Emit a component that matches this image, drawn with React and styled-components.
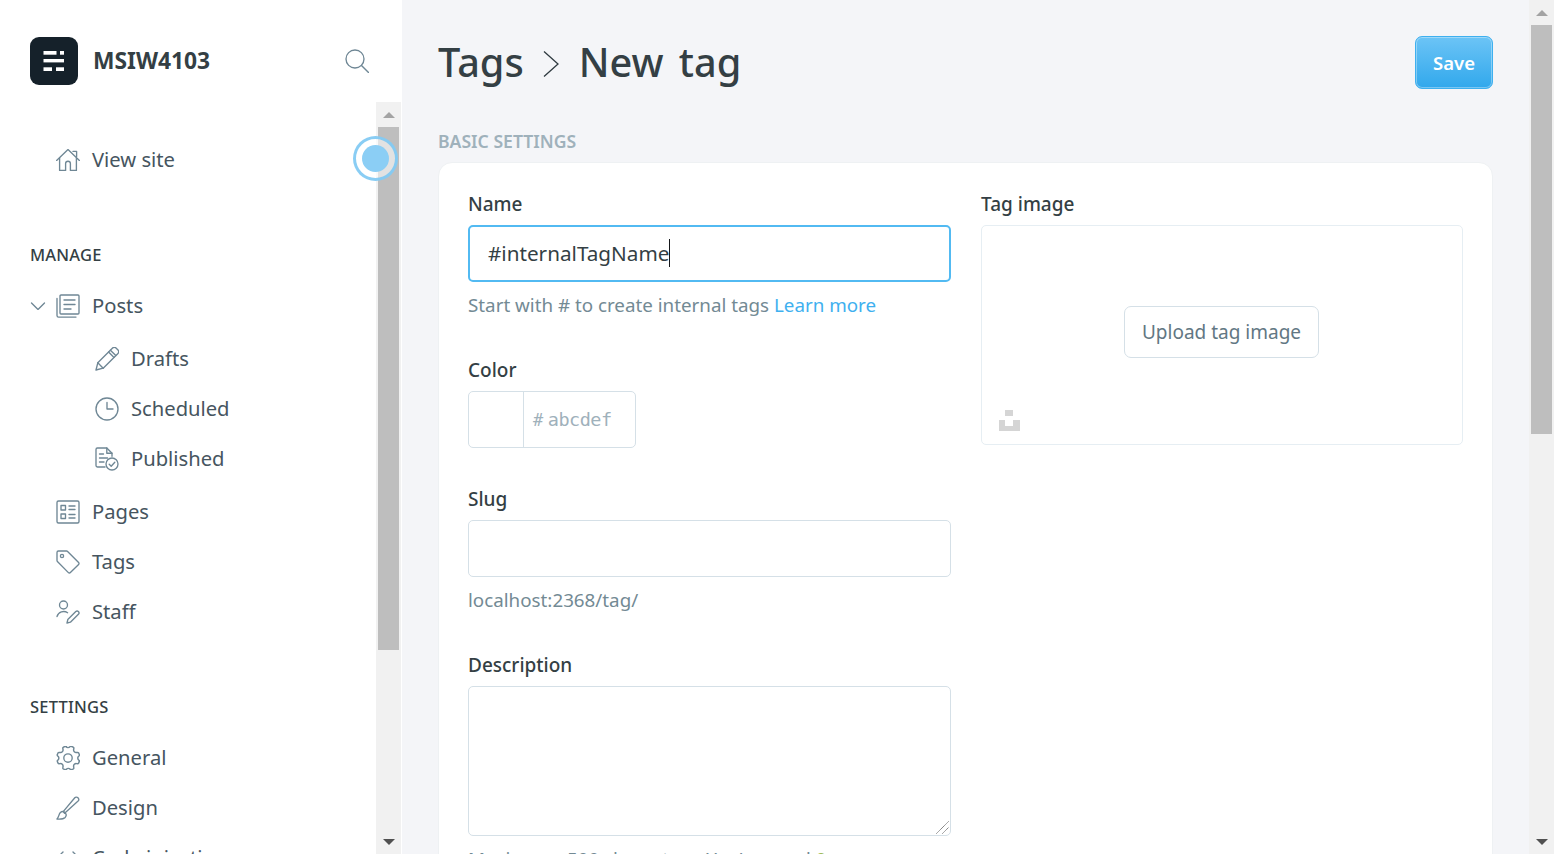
import React from "react";
import styled, { createGlobalStyle } from "styled-components";

const GlobalStyle = createGlobalStyle`
  html, body {
    margin: 0;
    padding: 0;
    height: 100%;
    overflow: hidden;
  }
  body {
    font-family: "Noto Sans", "Open Sans", sans-serif;
    color: #343f44;
  }
`;

const Svg = styled.svg`
  flex: none;
  width: ${p => p.$size || 24}px;
  height: ${p => p.$size || 24}px;
  fill: none;
  stroke: #6f8795;
  stroke-width: 1.35;
  stroke-linecap: round;
  stroke-linejoin: round;
`;

const Icon = ({ size, children }) => (
  <Svg viewBox="0 0 24 24" $size={size}>
    {children}
  </Svg>
);

const HomeIcon = () => (
  <Icon>
    <path d="M.6 12.4 12 1.6l11.4 10.8" />
    <path d="M3.6 10v12.4h6V15.6a2.4 2.4 0 0 1 4.8 0v6.8h6V10" />
    <path d="M17 3.4h3.6v5" />
  </Icon>
);

const PostsIcon = () => (
  <Icon>
    <rect x="4" y="1" width="19" height="19" rx="1" />
    <path d="M1 4.5v17a1.6 1.6 0 0 0 1.6 1.6H20" />
    <path d="M8 6h11M8 10.5h11M8 15h7" />
  </Icon>
);

const PencilIcon = () => (
  <Icon>
    <path d="M1 23l1.8-7.2L17.6 1a2.4 2.4 0 0 1 3.4 0l2 2a2.4 2.4 0 0 1 0 3.4L8.2 21.2z" />
    <path d="M2.8 15.8l5.4 5.4M15.4 3.2l5.4 5.4M13.6 5l5.4 5.4" />
  </Icon>
);

const ClockIcon = () => (
  <Icon>
    <circle cx="12" cy="12" r="11" />
    <path d="M12 5.5V12h6" />
  </Icon>
);

const PublishedIcon = () => (
  <Icon>
    <path d="M10 20H2.4A1.4 1.4 0 0 1 1 18.6V2.4A1.4 1.4 0 0 1 2.4 1h9.4L17 6.2v3" />
    <path d="M11.8 1v5.2H17" />
    <path d="M4.5 7h4M4.5 11h8M4.5 15h4.5" />
    <circle cx="17" cy="17" r="6" />
    <path d="M14.2 17.2l2 2 3.6-4" />
  </Icon>
);

const PagesIcon = () => (
  <Icon>
    <rect x="1" y="1" width="22" height="22" rx="1.5" />
    <rect x="5" y="5.5" width="4.5" height="4.5" />
    <rect x="5" y="14" width="4.5" height="4.5" />
    <path d="M13 6h6M13 9.5h6M13 14.5h6M13 18h6" />
  </Icon>
);

const TagIcon = () => (
  <Icon>
    <path d="M1 2.4A1.4 1.4 0 0 1 2.4 1h8.2c.4 0 .7.1 1 .4l11 11a1.4 1.4 0 0 1 0 2l-8.2 8.2a1.4 1.4 0 0 1-2 0l-11-11a1.4 1.4 0 0 1-.4-1z" />
    <circle cx="6" cy="6" r="1.6" />
  </Icon>
);

const StaffIcon = () => (
  <Icon>
    <circle cx="7.5" cy="5" r="4" />
    <path d="M1 16.5a7 7 0 0 1 10.6-3.8" />
    <path d="M11 23l.8-3.4 8-8a1.8 1.8 0 0 1 2.6 2.6l-8 8z" />
  </Icon>
);

const GearIcon = () => (
  <Icon>
    <circle cx="12" cy="12" r="4.2" />
    <path
      transform="translate(12 12) scale(1.08) translate(-12 -12)"
      d="M10.2 1.6a2.4 2.4 0 0 0 3.6 0l.3-.3a1 1 0 0 1 1.2 0c.6.2 1.2.5 1.7.8.3.2.5.5.4.9l-.2 1.2a2.4 2.4 0 0 0 2.7 2.7l1-.1c.4 0 .7.1.9.5.3.6.6 1.1.7 1.7.1.4 0 .8-.3 1a2.4 2.4 0 0 0 0 4.1c.3.2.4.6.3 1-.2.6-.4 1.2-.7 1.7-.2.4-.5.5-.9.5l-1-.1a2.4 2.4 0 0 0-2.7 2.7l.2 1.1c.1.4-.1.8-.4 1-.5.3-1.1.6-1.7.7a1 1 0 0 1-1.2-.3 2.4 2.4 0 0 0-3.6 0 1 1 0 0 1-1.2.3c-.6-.1-1.2-.4-1.7-.7-.3-.2-.5-.6-.4-1l.2-1.1a2.4 2.4 0 0 0-2.7-2.7l-1 .1c-.4 0-.7-.1-.9-.5-.3-.5-.5-1.1-.7-1.7-.1-.4 0-.8.3-1a2.4 2.4 0 0 0 0-4.1c-.3-.2-.4-.6-.3-1 .1-.6.4-1.1.7-1.7.2-.4.5-.5.9-.5l1 .1a2.4 2.4 0 0 0 2.7-2.7l-.2-1.2c-.1-.4.1-.7.4-.9.5-.3 1.1-.6 1.7-.8a1 1 0 0 1 1.2 0z"
    />
  </Icon>
);

const BrushIcon = () => (
  <Icon>
    <path d="M1 23c3 .2 6.6 0 8.2-1.6a3.4 3.4 0 0 0-4.8-4.8C2.6 18.4 3 21 1 23z" />
    <path d="M7.2 15.6 18.8 1.8a2 2 0 0 1 2.9-.2l.6.6a2 2 0 0 1-.2 2.9L8.6 17.2z" />
  </Icon>
);

const CodeIcon = () => (
  <Icon>
    <path d="M7 6 1 12l6 6M17 6l6 6-6 6" />
  </Icon>
);

const SearchIcon = () => (
  <Icon>
    <circle cx="10" cy="10" r="9" />
    <path d="M16.5 16.5 23.5 23.5" />
  </Icon>
);

const ChevronIcon = () => (
  <Svg viewBox="0 0 16 10" $size={16}>
    <path d="M1.5 2 8 8.4 14.5 2" />
  </Svg>
);

const Page = styled.div`
  display: flex;
  height: 100vh;
  overflow: hidden;
`;

const Sidebar = styled.aside`
  position: relative;
  flex: none;
  width: 402px;
  display: flex;
  flex-direction: column;
  background: #fff;
`;

const SidebarHead = styled.div`
  flex: none;
  height: 102px;
  box-sizing: border-box;
  display: flex;
  align-items: flex-start;
  padding: 37px 33px 0 30px;
`;

const Logo = styled.svg`
  flex: none;
  width: 48px;
  height: 48px;
`;

const BlogName = styled.div`
  flex: 1;
  margin-left: 15px;
  line-height: 48px;
  font-size: 22.8px;
  font-weight: 700;
  color: #343f44;
`;

const SearchButton = styled.div`
  display: flex;
  height: 48px;
  align-items: center;
`;

const SidebarBody = styled.div`
  flex: 1;
  min-height: 0;
  display: flex;
  padding-right: 1px;
`;

const NavScroll = styled.nav`
  flex: 1;
  min-width: 0;
  overflow: hidden;
  padding-top: 33px;
`;

const NavRow = styled.div`
  display: flex;
  align-items: center;
  height: 50px;
  padding-left: ${p => p.$indent}px;
  font-size: 20.2px;
  color: #465560;
`;

const NavText = styled.span`
  margin-left: 12px;
  padding-bottom: 2px;
`;

const Chevron = styled.span`
  display: flex;
  margin-right: 10px;
`;

const NavHeading = styled.h3`
  margin: 60px 0 16px 30px;
  font-size: 16.5px;
  line-height: 20px;
  letter-spacing: 0.2px;
  font-weight: 500;
  color: #343f44;
`;

const SubList = styled.div`
  margin: 3px 0;
`;

const FocusRing = styled.div`
  position: absolute;
  left: 353px;
  top: 136px;
  width: 45px;
  height: 45px;
  box-sizing: border-box;
  border: 3px solid rgba(124, 200, 243, 0.9);
  border-radius: 50%;
  display: flex;
  align-items: center;
  justify-content: center;
  background: rgba(255, 255, 255, 0.55);
`;

const FocusDot = styled.div`
  width: 27px;
  height: 27px;
  border-radius: 50%;
  background: #8bcef5;
`;

const Track = styled.div`
  flex: none;
  width: 25px;
  box-sizing: border-box;
  padding: 0 2px;
  display: flex;
  flex-direction: column;
  background: #f1f1f1;
`;

const ArrowSlot = styled.div`
  flex: none;
  height: 25px;
  display: flex;
  align-items: center;
  justify-content: center;
`;

const Arrow = styled.div`
  width: 0;
  height: 0;
  border-left: 6px solid transparent;
  border-right: 6px solid transparent;
  ${p =>
    p.$down
      ? "border-top: 6px solid #505050;"
      : "border-bottom: 6px solid #a3a3a3;"}
`;

const Thumb = styled.div`
  flex: none;
  height: ${p => p.$height}px;
  background: #bebebe;
`;

const Spacer = styled.div`
  flex: 1;
`;

const Main = styled.main`
  flex: 1;
  min-width: 0;
  overflow: hidden;
  box-sizing: border-box;
  padding: 36px 36px 0;
  background: #f4f5f8;
`;

const Header = styled.header`
  display: flex;
  align-items: center;
  justify-content: space-between;
`;

const Title = styled.h1`
  display: flex;
  align-items: center;
  margin: 0;
  font-size: 39.7px;
  line-height: 51px;
  word-spacing: 5px;
  font-weight: 500;
  color: #343f44;
`;

const TitleSep = styled.svg`
  width: 16px;
  height: 28px;
  margin: 3px 20px 0 19px;
  fill: none;
  stroke: #2f3a40;
  stroke-width: 1.3;
`;

const SaveButton = styled.button`
  width: 78px;
  height: 53px;
  padding: 0;
  border: 1px solid #3eb0ef;
  border-radius: 7px;
  background: linear-gradient(#6cc4f6, #31a8ec);
  box-shadow: inset 0 0 0 1px rgba(255, 255, 255, 0.35);
  font-family: inherit;
  font-size: 18.5px;
  font-weight: 600;
  color: #fff;
`;

const SectionTitle = styled.h4`
  margin: 40px 0 9px;
  font-size: 17.6px;
  line-height: 24px;
  font-weight: 600;
  color: #9fb1bb;
`;

const Card = styled.section`
  display: grid;
  grid-template-columns: 483px 482px;
  column-gap: 30px;
  align-items: start;
  padding: 29px 30px 40px 29px;
  background: #fff;
  border: 1px solid #eef1f3;
  border-radius: 14px;
  box-sizing: border-box;
`;

const Field = styled.div`
  margin-bottom: ${p => p.$gap || 0}px;
`;

const Label = styled.label`
  display: block;
  margin-bottom: 9px;
  font-size: 19px;
  line-height: 24px;
  font-weight: 500;
  color: #343f44;
`;

const NameBox = styled.div`
  display: flex;
  align-items: center;
  height: 57px;
  box-sizing: border-box;
  padding: 0 0 2px 18px;
  border: 2px solid #52baf2;
  border-radius: 5px;
  font-size: 20.7px;
  color: #343f44;
`;

const Caret = styled.span`
  width: 1px;
  height: 28px;
  background: #15171a;
`;

const TextInput = styled.input`
  display: block;
  width: 100%;
  height: 57px;
  box-sizing: border-box;
  border: 1px solid #d5e0e7;
  border-radius: 5px;
  background: #fff;
  outline: none;
`;

const AreaWrap = styled.div`
  position: relative;
`;

const TextArea = styled.textarea`
  display: block;
  width: 100%;
  height: 150px;
  box-sizing: border-box;
  border: 1px solid #d5e0e7;
  border-radius: 5px;
  background: #fff;
  outline: none;
  resize: none;
`;

const Grip = styled.svg`
  position: absolute;
  right: 2px;
  bottom: 2px;
  width: 13px;
  height: 13px;
  fill: none;
  stroke: #555;
  stroke-width: 1;
  stroke-dasharray: 1 0.6;
`;

const Hint = styled.p`
  margin: 10px 0 0;
  font-size: 18.8px;
  line-height: 26px;
  color: #738a94;
`;

const HintLink = styled.span`
  color: #3eb0ef;
`;

const UsedCount = styled.span`
  color: #9fbb58;
  font-weight: 500;
`;

const ColorBox = styled.div`
  display: flex;
  width: 168px;
  height: 57px;
  box-sizing: border-box;
  border: 1px solid #d5e0e7;
  border-radius: 5px;
`;

const Swatch = styled.div`
  flex: none;
  width: 54px;
  border-right: 1px solid #d5e0e7;
`;

const HexValue = styled.div`
  display: flex;
  align-items: center;
  padding-left: 9px;
  font-family: "DejaVu Sans Mono", "Liberation Mono", monospace;
  font-size: 18.5px;
  letter-spacing: -0.5px;
  color: #9fb1bb;
`;

const HexHash = styled.span`
  margin-right: 5px;
  font-size: 17px;
`;

const ImageBox = styled.div`
  position: relative;
  height: 220px;
  box-sizing: border-box;
  display: flex;
  align-items: center;
  justify-content: center;
  border: 1px solid #e6eef3;
  border-radius: 5px;
`;

const UploadButton = styled.button`
  width: 195px;
  height: 52px;
  padding: 0;
  margin: 0 1px 7px 0;
  border: 1px solid #d5e0e7;
  border-radius: 7px;
  background: #fff;
  font-family: inherit;
  font-size: 19px;
  color: #627783;
`;

const UnsplashMark = styled.svg`
  position: absolute;
  left: 17px;
  bottom: 13px;
  width: 21px;
  height: 21px;
  fill: #d5d5d5;
`;

const navManage = [
  { text: "Pages", icon: <PagesIcon /> },
  { text: "Tags", icon: <TagIcon /> },
  { text: "Staff", icon: <StaffIcon /> }
];

const navPosts = [
  { text: "Drafts", icon: <PencilIcon /> },
  { text: "Scheduled", icon: <ClockIcon /> },
  { text: "Published", icon: <PublishedIcon /> }
];

const navSettings = [
  { text: "General", icon: <GearIcon /> },
  { text: "Design", icon: <BrushIcon /> },
  { text: "Code injection", icon: <CodeIcon /> }
];

const Scrollbar = ({ thumb }) => (
  <Track>
    <ArrowSlot>
      <Arrow />
    </ArrowSlot>
    <Thumb $height={thumb} />
    <Spacer />
    <ArrowSlot>
      <Arrow $down />
    </ArrowSlot>
  </Track>
);

const App = () => (
  <Page>
    <GlobalStyle />
    <Sidebar>
      <SidebarHead>
        <Logo viewBox="0 0 48 48">
          <rect width="48" height="48" rx="9" fill="#15212a" />
          <g fill="#fff">
            <rect x="13.5" y="14" width="13" height="3.7" />
            <rect x="30" y="14" width="4" height="3.7" />
            <rect x="13.5" y="22" width="20.5" height="3.4" />
            <rect x="13.5" y="30.3" width="8.5" height="3.7" />
            <rect x="26" y="30.3" width="8" height="3.7" />
          </g>
        </Logo>
        <BlogName>MSIW4103</BlogName>
        <SearchButton>
          <SearchIcon />
        </SearchButton>
      </SidebarHead>
      <SidebarBody>
        <NavScroll>
          <NavRow $indent={56}>
            <HomeIcon />
            <NavText>View site</NavText>
          </NavRow>
          <NavHeading>MANAGE</NavHeading>
          <NavRow $indent={30}>
            <Chevron>
              <ChevronIcon />
            </Chevron>
            <PostsIcon />
            <NavText>Posts</NavText>
          </NavRow>
          <SubList>
            {navPosts.map(item => (
              <NavRow key={item.text} $indent={95}>
                {item.icon}
                <NavText>{item.text}</NavText>
              </NavRow>
            ))}
          </SubList>
          {navManage.map(item => (
            <NavRow key={item.text} $indent={56}>
              {item.icon}
              <NavText>{item.text}</NavText>
            </NavRow>
          ))}
          <NavHeading>SETTINGS</NavHeading>
          {navSettings.map(item => (
            <NavRow key={item.text} $indent={56}>
              {item.icon}
              <NavText>{item.text}</NavText>
            </NavRow>
          ))}
        </NavScroll>
        <Scrollbar thumb={523} />
      </SidebarBody>
      <FocusRing>
        <FocusDot />
      </FocusRing>
    </Sidebar>
    <Main>
      <Header>
        <Title>
          Tags
          <TitleSep viewBox="0 0 16 28">
            <path d="M1 1.5 15 14 1 26.5" />
          </TitleSep>
          New tag
        </Title>
        <SaveButton>Save</SaveButton>
      </Header>
      <SectionTitle>BASIC SETTINGS</SectionTitle>
      <Card>
        <div>
          <Field $gap={40}>
            <Label>Name</Label>
            <NameBox>
              #internalTagName
              <Caret />
            </NameBox>
            <Hint>
              Start with # to create internal tags <HintLink>Learn more</HintLink>
            </Hint>
          </Field>
          <Field $gap={39}>
            <Label>Color</Label>
            <ColorBox>
              <Swatch />
              <HexValue>
                <HexHash>#</HexHash>abcdef
              </HexValue>
            </ColorBox>
          </Field>
          <Field $gap={40}>
            <Label>Slug</Label>
            <TextInput />
            <Hint>localhost:2368/tag/</Hint>
          </Field>
          <Field>
            <Label>Description</Label>
            <AreaWrap>
              <TextArea />
              <Grip viewBox="0 0 13 13">
                <path d="M0.5 12.5 12.5 0.5M6.5 12.5 12.5 6.5" />
              </Grip>
            </AreaWrap>
            <Hint>
              Maximum: 500 characters. You've used <UsedCount>0</UsedCount>.
            </Hint>
          </Field>
        </div>
        <div>
          <Label>Tag image</Label>
          <ImageBox>
            <UploadButton>Upload tag image</UploadButton>
            <UnsplashMark viewBox="0 0 21 21">
              <path d="M6 0h8v6H6zM0 10h6v6h8v-6h7v11H0z" />
            </UnsplashMark>
          </ImageBox>
        </div>
      </Card>
    </Main>
    <Scrollbar thumb={409} />
  </Page>
);

export default App;
